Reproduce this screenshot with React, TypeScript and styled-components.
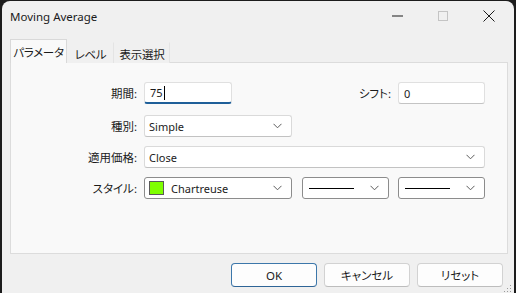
import styled, { createGlobalStyle, css } from 'styled-components'

const GlobalStyle = createGlobalStyle`
  html, body {
    margin: 0;
    padding: 0;
    background: #1c1c1c;
    overflow: hidden;
  }
  body {
    font-family: "Noto Sans", "Noto Sans CJK JP", sans-serif;
    font-size: 12px;
    color: #1b1b1b;
    font-feature-settings: "palt" 1;
  }
`

const Window = styled.div`
  margin: 1px 2px 0 2px;
  height: 300px;
  background: #f0f0f0;
  border-radius: 8px 8px 0 0;
  display: flex;
  flex-direction: column;
`

const TitleBar = styled.div`
  height: 32px;
  display: flex;
  align-items: center;
  padding-left: 8px;
  padding-right: 2px;
`

const Title = styled.div`
  flex: 1;
  font-size: 11.5px;
  margin-top: -1px;
`

const CaptionButton = styled.div`
  width: 46px;
  height: 32px;
  display: flex;
  align-items: center;
  justify-content: center;
  margin-top: -2px;
`

const Body = styled.div`
  padding: 6px 6px 0 8px;
  display: flex;
  flex-direction: column;
`

const TabRow = styled.div`
  display: flex;
  align-items: flex-end;
  height: 24px;
  position: relative;
  z-index: 1;
  margin-bottom: -1px;
`

const Tab = styled.div<{ $active?: boolean; $width: number }>`
  width: ${p => p.$width}px;
  height: ${p => (p.$active ? '24px' : '21px')};
  display: flex;
  align-items: center;
  justify-content: center;
  font-size: 11.5px;
  letter-spacing: -0.3px;
  white-space: nowrap;
  box-sizing: border-box;
  border: 1px solid ${p => (p.$active ? '#d9d9d9' : 'transparent')};
  border-bottom: none;
  background: ${p => (p.$active ? '#f9f9f9' : '#f0f0f0')};
  ${p =>
    !p.$active &&
    css`
      border-right: 1px solid #e4e4e4;
      padding-top: 1px;
    `}
`

const Panel = styled.div`
  height: 192px;
  box-sizing: border-box;
  background: #f9f9f9;
  border: 1px solid #dcdcdc;
  padding-top: 19px;
  display: flex;
  flex-direction: column;
  gap: 9px;
`

const Row = styled.div<{ $extra?: number }>`
  display: flex;
  align-items: center;
  height: 22px;
  margin-bottom: ${p => p.$extra ?? 0}px;
`

const Label = styled.div<{ $width?: number }>`
  width: ${p => p.$width ?? 126}px;
  text-align: right;
  padding-right: 7px;
  box-sizing: content-box;
  white-space: nowrap;
  font-size: 11.5px;
`

const TextInput = styled.div<{ $focused?: boolean; $width: number }>`
  width: ${p => p.$width}px;
  height: 22px;
  box-sizing: border-box;
  background: #ffffff;
  border: 1px solid #e0e0e0;
  border-bottom: ${p => (p.$focused ? '2px solid #1f5f99' : '1px solid #c4c4c4')};
  border-radius: 3px;
  padding: 0 5px;
  display: flex;
  align-items: center;
  font-size: 11px;
`

const Caret = styled.span`
  display: inline-block;
  width: 1px;
  height: 14px;
  background: #000;
  margin-left: 1px;
`

const Select = styled.div<{ $width: number; $dark?: boolean }>`
  width: ${p => p.$width}px;
  height: 22px;
  box-sizing: border-box;
  background: #ffffff;
  border: 1px solid ${p => (p.$dark ? '#8c8c8c' : '#dadada')};
  border-bottom-color: ${p => (p.$dark ? '#8c8c8c' : '#c2c2c2')};
  border-radius: 3px;
  padding: 0 9px 0 4px;
  display: flex;
  align-items: center;
  gap: 6px;
  font-size: 11px;
`

const SelectValue = styled.div`
  flex: 1;
  display: flex;
  align-items: center;
  white-space: nowrap;
`

const Swatch = styled.div<{ $color: string }>`
  width: 15px;
  height: 14px;
  background: ${p => p.$color};
  border: 1px solid #5a5a5a;
  box-sizing: border-box;
  margin-right: 7px;
`

const LineSample = styled.div`
  flex: 1;
  height: 1px;
  background: #000;
  margin: 0 10px 0 2px;
`

const Spacer = styled.div<{ $size?: number }>`
  flex: ${p => (p.$size ? `0 0 ${p.$size}px` : '1')};
`

const Footer = styled.div`
  display: flex;
  justify-content: flex-end;
  gap: 7px;
  padding: 9px 5px 0 0;
  position: relative;
`

const Button = styled.div<{ $primary?: boolean }>`
  width: 86px;
  height: 24px;
  box-sizing: border-box;
  background: #fdfdfd;
  border: 1px solid ${p => (p.$primary ? '#3c77aa' : '#d2d2d2')};
  border-bottom-color: ${p => (p.$primary ? '#2f6597' : '#bdbdbd')};
  border-radius: 4px;
  display: flex;
  align-items: center;
  justify-content: center;
  font-size: 11.5px;
`

const Grip = styled.svg`
  position: absolute;
  right: -4px;
  bottom: -6px;
`

const Chevron = () => (
  <svg width="9" height="6" viewBox="0 0 9 6">
    <path d="M0.5 0.8 L4.5 4.8 L8.5 0.8" fill="none" stroke="#5c5c5c" strokeWidth="1" />
  </svg>
)

const App = () => {
  return (
    <>
      <GlobalStyle />
      <Window>
        <TitleBar>
          <Title>Moving Average</Title>
          <CaptionButton>
            <svg width="11" height="2" viewBox="0 0 11 2">
              <rect x="0" y="0.5" width="11" height="1" fill="#1b1b1b" />
            </svg>
          </CaptionButton>
          <CaptionButton>
            <svg width="10" height="10" viewBox="0 0 10 10">
              <rect x="0.5" y="0.5" width="9" height="9" fill="none" stroke="#c4c4c4" />
            </svg>
          </CaptionButton>
          <CaptionButton>
            <svg width="12" height="12" viewBox="0 0 12 12">
              <path d="M0.5 0.5 L11.5 11.5 M11.5 0.5 L0.5 11.5" stroke="#1b1b1b" strokeWidth="1" />
            </svg>
          </CaptionButton>
        </TitleBar>
        <Body>
          <TabRow>
            <Tab $active $width={57}>パラメータ</Tab>
            <Tab $width={47}>レベル</Tab>
            <Tab $width={56}>表示選択</Tab>
          </TabRow>
          <Panel>
            <Row $extra={2}>
              <Label>期間:</Label>
              <TextInput $focused $width={88}>
                75
                <Caret />
              </TextInput>
              <Spacer />
              <Label $width={60}>シフト:</Label>
              <TextInput $width={87}>0</TextInput>
              <Spacer $size={22} />
            </Row>
            <Row>
              <Label>種別:</Label>
              <Select $width={148}>
                <SelectValue>Simple</SelectValue>
                <Chevron />
              </Select>
            </Row>
            <Row>
              <Label>適用価格:</Label>
              <Select $width={341}>
                <SelectValue>Close</SelectValue>
                <Chevron />
              </Select>
            </Row>
            <Row>
              <Label>スタイル:</Label>
              <Select $width={148} $dark>
                <SelectValue>
                  <Swatch $color="#7fff00" />
                  Chartreuse
                </SelectValue>
                <Chevron />
              </Select>
              <Spacer $size={10} />
              <Select $width={87} $dark>
                <LineSample />
                <Chevron />
              </Select>
              <Spacer $size={9} />
              <Select $width={87} $dark>
                <LineSample />
                <Chevron />
              </Select>
            </Row>
          </Panel>
          <Footer>
            <Button $primary>OK</Button>
            <Button>キャンセル</Button>
            <Button>リセット</Button>
            <Grip width="8" height="8" viewBox="0 0 8 8">
              <rect x="6" y="0" width="1" height="1" fill="#9a9a9a" />
              <rect x="3" y="3" width="1" height="1" fill="#9a9a9a" />
              <rect x="6" y="3" width="1" height="1" fill="#9a9a9a" />
              <rect x="0" y="6" width="1" height="1" fill="#9a9a9a" />
              <rect x="3" y="6" width="1" height="1" fill="#9a9a9a" />
              <rect x="6" y="6" width="1" height="1" fill="#9a9a9a" />
            </Grip>
          </Footer>
        </Body>
      </Window>
    </>
  )
}

export default App
